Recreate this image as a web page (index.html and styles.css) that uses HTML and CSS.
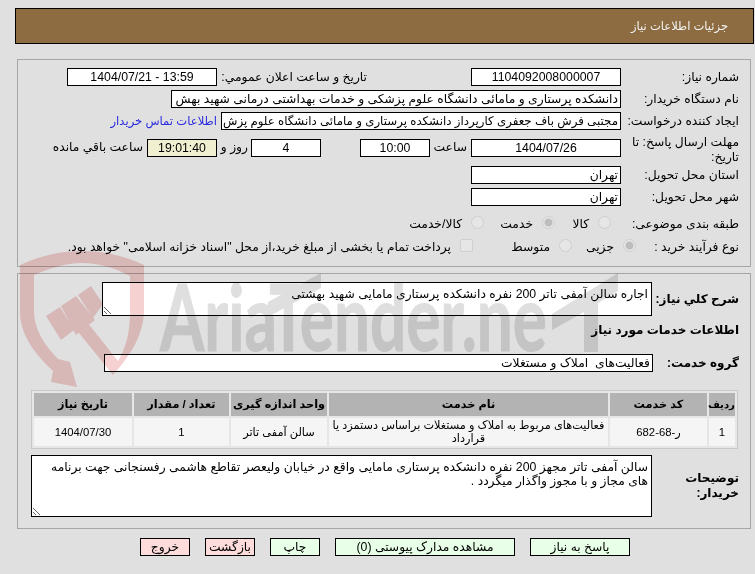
FILE: index.html
```html
<!DOCTYPE html>
<html lang="fa" dir="rtl">
<head>
<meta charset="utf-8">
<title>جزئیات اطلاعات نیاز</title>
<link rel="stylesheet" href="styles.css">
</head>
<body>
<div class="page">
  <header class="title-bar">جزئیات اطلاعات نیاز</header>

  <section class="panel panel-info">
    <div class="row">
      <span class="label">شماره نیاز:</span>
      <span class="field w150 center">1104092008000007</span>
      <span class="label-date">تاریخ و ساعت اعلان عمومي:</span>
      <span class="field w150 center">13:59 - 1404/07/21</span>
    </div>
    <div class="row gap4">
      <span class="label">نام دستگاه خریدار:</span>
      <span class="field w450 fit-wide">دانشکده پرستاری و مامائی دانشگاه علوم پزشکی و خدمات بهداشتی درمانی شهید بهش</span>
    </div>
    <div class="row gap4">
      <span class="label">ایجاد کننده درخواست:</span>
      <span class="field w400 fit-narrow">مجتبی فرش باف جعفری کارپرداز دانشکده پرستاری و مامائی دانشگاه علوم پزش</span>
      <a class="contact" href="#">اطلاعات تماس خریدار</a>
    </div>
    <div class="row row-deadline">
      <span class="label">مهلت ارسال پاسخ: تا تاریخ:</span>
      <span class="field w150 center">1404/07/26</span>
      <span class="txt w40">ساعت</span>
      <span class="field w70 center">10:00</span>
      <span class="spacer"></span>
      <span class="field w70 center">4</span>
      <span class="txt w33">روز و</span>
      <span class="field w70 center timer">19:01:40</span>
      <span class="txt remain">ساعت باقي مانده</span>
    </div>
    <div class="row gap1">
      <span class="label">استان محل تحویل:</span>
      <span class="field w150">تهران</span>
    </div>
    <div class="row gap4">
      <span class="label">شهر محل تحویل:</span>
      <span class="field w150">تهران</span>
    </div>
    <div class="row gap10">
      <span class="label">طبقه بندی موضوعی:</span>
      <span class="options">
        <label class="opt o-kala"><input type="radio" name="cat" disabled>کالا</label>
        <label class="opt o-khedmat"><input type="radio" name="cat" checked disabled>خدمت</label>
        <label class="opt"><input type="radio" name="cat" disabled>کالا/خدمت</label>
      </span>
    </div>
    <div class="row gap7">
      <span class="label">نوع فرآیند خرید :</span>
      <span class="options">
        <label class="opt o-jozei"><input type="radio" name="proc" checked disabled>جزیی</label>
        <label class="opt o-motavaset"><input type="radio" name="proc" disabled>متوسط</label>
        <label class="opt"><input type="checkbox" disabled>پرداخت تمام یا بخشی از مبلغ خرید،از محل "اسناد خزانه اسلامی" خواهد بود.</label>
      </span>
    </div>
  </section>

  <section class="panel panel-need">
    <div class="row">
      <span class="label-b">شرح کلي نیاز:</span>
      <textarea class="area area-short" readonly>اجاره سالن آمفی تاتر 200 نفره دانشکده پرستاری مامایی شهید بهشتی</textarea>
    </div>
    <h2 class="need-title">اطلاعات خدمات مورد نیاز</h2>
    <div class="row group-row">
      <span class="label-b">گروه خدمت:</span>
      <span class="field w550">فعالیت‌های&nbsp; املاک و مستغلات</span>
    </div>
    <table class="items">
      <colgroup>
        <col class="c1"><col class="c2"><col class="c3"><col class="c4"><col class="c5"><col class="c6">
      </colgroup>
      <thead>
        <tr><th>ردیف</th><th>کد خدمت</th><th>نام خدمت</th><th>واحد اندازه گیری</th><th>تعداد / مقدار</th><th>تاریخ نیاز</th></tr>
      </thead>
      <tbody>
        <tr><td>1</td><td>ر-68-682</td><td>فعالیت‌های مربوط به املاک و مستغلات براساس دستمزد یا قرارداد</td><td>سالن آمفی تاتر</td><td>1</td><td>1404/07/30</td></tr>
      </tbody>
    </table>
    <div class="row notes-row">
      <span class="label-b notes-label">توضیحات خریدار:</span>
      <textarea class="area area-tall" readonly>سالن آمفی تاتر مجهز 200 نفره دانشکده پرستاری مامایی واقع در خیابان ولیعصر تقاطع هاشمی رفسنجانی جهت برنامه های مجاز و با مجوز واگذار میگردد .</textarea>
    </div>
  </section>

  <nav class="actions">
    <button class="btn go w100" type="button">پاسخ به نیاز</button>
    <button class="btn go w180" type="button">مشاهده مدارک پیوستی (0)</button>
    <button class="btn go w50" type="button">چاپ</button>
    <button class="btn stop w50" type="button">بازگشت</button>
    <button class="btn stop w50" type="button">خروج</button>
  </nav>
</div>

<svg class="watermark" viewBox="0 0 755 574" width="755" height="574" aria-hidden="true">
  <path fill="#f6d1d1" fill-rule="evenodd" d="M20 265 C40 256 60 251 82 251 C104 251 125 256 144 265 L144 312 C143 336 130 356 113 375 L75 328 L87 322 L118 361 C126 348 130 332 130 312 L130 276 C115 268 98 263 82 263 C66 263 50 268 34 275 L34 312 C34 328 44 345 58 359 L70 362 L77 387 L51 382 L53 371 C34 353 20 334 20 312 Z"/>
  <path fill="#f6d1d1" d="M46 316 L60 307 L74 330 L61 340 Z M61 306 L76 296 L95 320 L76 335 Z M78 295 L91 286 L103 304 L93 318 Z"/>
  <text class="wm-text" x="160" y="351" textLength="387" lengthAdjust="spacingAndGlyphs">AriaTender.ne</text>
  <path fill="#dfdfdf" d="M268 302 L321 273 L321 288 L268 317 Z M552 314 L618 273 L618 291 L598 303 L598 352 L584 352 L584 312 L552 330 Z"/>
</svg>
</body>
</html>
```
FILE: styles.css
```css
* { box-sizing: border-box; }
html { background: #e0e0e0; }
html, body { margin: 0; padding: 0; height: 574px; overflow: hidden; }
body {
  position: relative;
  font-family: "Liberation Sans", "DejaVu Sans", sans-serif;
  font-size: 12.3px;
  color: #000;
}
.watermark { position: absolute; left: 0; top: 0; direction: ltr; mix-blend-mode: multiply; pointer-events: none; }
.wm-text { font-family: "Lato", sans-serif; font-weight: 700; font-size: 92px; fill: #dfdfdf; stroke: #dfdfdf; stroke-width: 1px; direction: ltr; text-anchor: start; }

.page { width: 739px; margin: 8px 1px 0 0; }
.title-bar {
  height: 36px;
  background: #8c6c40;
  border: 1px solid #000;
  color: #f4f4f4;
  font-size: 11.5px;
  line-height: 34px;
  padding-right: 25px;
}
.panel { width: 734px; margin-right: 3px; border: 1px solid #a6a6a6; }
.panel-info { height: 208px; margin-top: 15px; padding: 8px 11px 0 0; }
.panel-need { height: 256px; margin-top: 6px; padding: 8px 0 0 0; }

.row { display: flex; align-items: center; }
.gap1 { margin-top: 1px; }
.gap4 { margin-top: 4px; }
.gap7 { margin-top: 7px; }
.gap10 { margin-top: 10px; }
.label { width: 118px; flex: none; line-height: 15px; }
.label-date { width: 150px; margin-right: 104px; white-space: nowrap; }
.field {
  height: 18px; line-height: 16px; flex: none;
  background: #fff; border: 1px solid #000;
  padding: 0 2px; white-space: nowrap; overflow: hidden;
}
.fit-wide { font-size: 12.3px; }
.fit-narrow { font-size: 11.8px; }
.center { text-align: center; }
.w70 { width: 70px; }
.w150 { width: 150px; }
.w400 { width: 400px; }
.w450 { width: 450px; }
.w550 { width: 550px; }
.contact { color: #2a2ae0; font-size: 11.6px; text-decoration: none; margin-right: 4px; white-space: nowrap; }
.row-deadline { margin-top: 5px; height: 30px; align-items: flex-start; }
.row-deadline .field { margin-top: 4px; }
.row-deadline .txt { margin-top: 5px; white-space: nowrap; }
.txt.w40 { width: 41px; padding-right: 4px; }
.spacer { width: 39px; flex: none; }
.txt.w33 { width: 34px; padding-right: 3px; }
.timer { background: #f0f0d0; }
.remain { padding-right: 4px; }

.options { display: flex; align-items: center; }
.opt { display: flex; align-items: center; white-space: nowrap; }
.opt input {
  appearance: none; -webkit-appearance: none; margin: 0 0 3px 9px; flex: none;
  width: 13px; height: 13px; border: 1px solid #cfcfcf; background: #e6e6e6;
}
.opt input[type=radio] { border-radius: 50%; }
.opt input[type=radio]:checked { background: radial-gradient(circle, #bdbdbd 0 3.5px, #e6e6e6 4.5px); }
.opt input[type=checkbox] { border-radius: 2px; }
.o-kala { margin-right: 10px; width: 56px; }
.o-khedmat { width: 71px; }
.o-jozei { margin-right: -15px; width: 64px; }
.o-motavaset { width: 99px; }

.label-b { font-weight: 700; font-size: 12px; line-height: 15px; flex: none; width: 98px; padding-right: 11px; white-space: nowrap; }
.area {
  display: block; flex: none; background: #fff; border: 1px solid #000; border-radius: 0;
  font: inherit; line-height: 14px; padding: 4px 3px 1px; margin: 0; color: #000; outline: none;
}
.area-short { width: 550px; height: 34px; }
.area-tall { width: 621px; height: 62px; }
.need-title { font-size: 12px; font-weight: 700; margin: 5px 11px 0 0; line-height: 18px; height: 18px; }
.group-row { margin-top: 15px; }
.group-row .label-b { width: 97px; }
.group-row .field { width: 549px; }

.items {
  table-layout: fixed; width: 707px; margin: 18px 12px 0 0;
  border-collapse: separate; border-spacing: 2px;
  border: 1px solid #c8c8c8; background: #e6e6e6;
  font-size: 11.3px;
}
.c1 { width: 26px; } .c2 { width: 97px; } .c3 { width: 279px; }
.c4 { width: 96px; } .c5 { width: 95px; } .c6 { width: 98px; }
.items th { height: 23px; padding: 0; background: #b3b3b3; font-weight: 700; white-space: nowrap; }
.items th:first-child { font-size: 10.2px; }
.items td { height: 28px; padding: 0 1px; background: #f5f5f5; text-align: center; line-height: 13px; }
.notes-row { margin-top: 6px; }
.notes-row .notes-label { white-space: normal; }

.actions { display: flex; gap: 15px; margin-top: 9px; padding-right: 124px; }
.btn {
  height: 18px; padding: 0; border: 1px solid #000; border-radius: 0;
  font: inherit; color: #000; flex: none; line-height: 14px;
}
.go { background: #e8ffe8; }
.stop { background: #ffdcdc; }
.w50 { width: 50px; }
.w100 { width: 100px; }
.w180 { width: 180px; }
```
